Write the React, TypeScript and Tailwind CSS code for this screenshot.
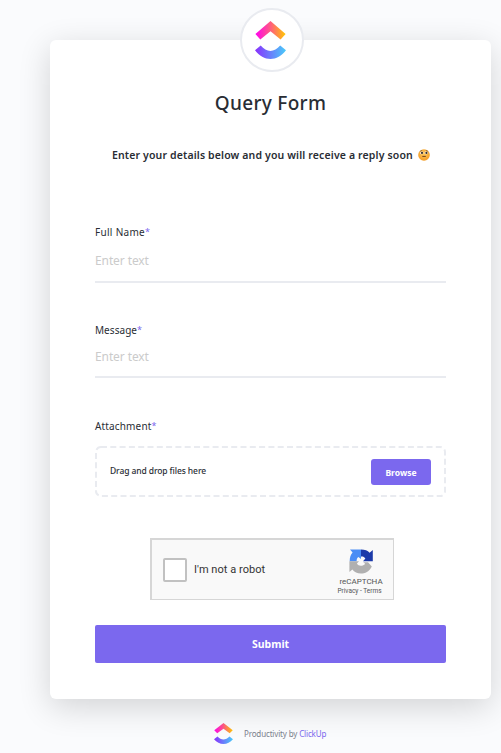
import React from "react";

function ClickUpMark({ id, className }: { id: string; className: string }) {
  return (
    <svg viewBox="0 0 31 38" preserveAspectRatio="none" className={className} aria-hidden="true">
      <defs>
        <linearGradient id={`${id}-top`} x1="0" x2="1" y1="0" y2="0">
          <stop offset="0" stopColor="#ff02f0" />
          <stop offset="0.5" stopColor="#ff5c80" />
          <stop offset="1" stopColor="#ffc800" />
        </linearGradient>
        <linearGradient id={`${id}-bottom`} x1="0" x2="1" y1="0" y2="0">
          <stop offset="0" stopColor="#8930fd" />
          <stop offset="1" stopColor="#49ccf9" />
        </linearGradient>
      </defs>
      <path d="M15.5 0 L30.6 13 L25.6 18.6 L15.5 10.2 L5.3 18.6 L0.4 13 Z" fill={`url(#${id}-top)`} />
      <path
        d="M0 29.2 L5.7 24.6 C11.6 31.8 19.2 31.8 25.2 24.6 L31 29.2 C22.5 40.8 8.5 40.8 0 29.2 Z"
        fill={`url(#${id}-bottom)`}
      />
    </svg>
  );
}

function FaceEmoji() {
  return (
    <svg viewBox="0 0 12 12" className="h-3 w-3 shrink-0" aria-hidden="true">
      <defs>
        <radialGradient id="face" cx="0.5" cy="0.4" r="0.7">
          <stop offset="0" stopColor="#ffc95c" />
          <stop offset="1" stopColor="#f0941c" />
        </radialGradient>
      </defs>
      <circle cx="6" cy="6" r="5.8" fill="url(#face)" />
      <ellipse cx="3.8" cy="3.9" rx="1.6" ry="1.4" fill="#fff" />
      <ellipse cx="8.2" cy="3.9" rx="1.6" ry="1.4" fill="#fff" />
      <circle cx="4" cy="3.9" r="1.1" fill="#39302c" />
      <circle cx="8.4" cy="3.9" r="1.1" fill="#39302c" />
      <path d="M1.8 2.3 L4.2 1.4 M7.8 1.4 L10.2 2.3" stroke="#6b4319" strokeWidth="0.6" />
      <path d="M4.3 7.4 H7.8" stroke="#70401b" strokeWidth="1" />
    </svg>
  );
}

function RecaptchaMark() {
  return (
    <svg viewBox="0 0 24 25" className="h-[25px] w-6" aria-hidden="true">
      <path d="M12 0.5 C16 0.5 18.6 1.6 20.6 3.8 L23.8 1 V12.2 H14 L16.4 9.6 C15.4 8 14 7.4 12 7.6 Z" fill="#1c3aa9" />
      <path d="M0.7 12.3 C0.7 8.3 1.6 5.8 3.6 3.6 L1 0.5 H12 V10 L9.4 8 C8 9 7.6 10.4 7.6 12.3 Z" fill="#4a8df5" />
      <path d="M0.4 12.3 H10 L7.9 14.6 C9.4 17.4 13.8 17.6 16.2 14.8 L14.2 13.2 H19 L22.8 17.4 C18.5 26.3 7.5 26.3 3.4 20.4 L0.4 23 Z" fill="#b0b0b0" />
    </svg>
  );
}

function Label({ text, spacing }: { text: string; spacing: string }) {
  return (
    <div className="flex h-4 whitespace-nowrap text-[10px] leading-4 text-[#292d34]">
      <span className={spacing}>{text}</span>
      <span className="text-[9px] leading-[15px] text-[#7b68ee]">*</span>
    </div>
  );
}

export default function App() {
  return (
    <div className="h-[753px] w-[501px] overflow-hidden bg-[#fafbfd] pt-10 pl-[50px] font-['Noto_Sans','Open_Sans',sans-serif]">
      <main className="relative h-[659px] w-[441px] rounded-[6px] bg-white px-[45px] pt-[47px] shadow-[0_8px_32px_rgba(0,0,0,0.16)]">
        <div className="absolute -top-8 left-[190px] flex h-16 w-16 items-center justify-center rounded-full border-2 border-[#e9ebf0] bg-white pr-[3px]">
          <ClickUpMark id="badge" className="h-[38px] w-[31px]" />
        </div>

        <h1 className="h-8 whitespace-nowrap text-center text-[19px] font-medium leading-8 tracking-[0.3px] text-[#292d34]">
          Query Form
        </h1>
        <p className="mt-7 ml-[17px] flex h-4 items-center gap-[5px] whitespace-nowrap text-[10.5px] font-semibold leading-4 text-[#292d34]">
          <span className="w-[301px] tracking-[0.14px]">Enter your details below and you will receive a reply soon</span>
          <FaceEmoji />
        </p>

        <div className="mt-[61px]">
          <Label text="Full Name" spacing="tracking-[0.3px]" />
          <div className="mt-3 h-[31px] border-b-2 border-[#e9ebf0] text-[12px] leading-[18px] tracking-[-0.1px] text-[#cbcbcb]">Enter text</div>
        </div>
        <div className="mt-[39px]">
          <Label text="Message" spacing="tracking-[0.05px]" />
          <div className="mt-[10px] h-[30px] border-b-2 border-[#e9ebf0] text-[12px] leading-[18px] tracking-[-0.1px] text-[#cbcbcb]">Enter text</div>
        </div>
        <div className="mt-10">
          <Label text="Attachment" spacing="tracking-[0.15px]" />
          <div className="relative mt-3 flex h-[51px] items-center justify-between pr-[15px] pl-[15px]">
            <svg className="absolute inset-0 h-full w-full" aria-hidden="true">
              <rect x="1" y="1" width="349" height="49" rx="5" fill="none" stroke="#e9ebf0" strokeWidth="2" strokeDasharray="6 3.3" />
            </svg>
            <span className="whitespace-nowrap text-[8.5px] font-medium tracking-[-0.1px] text-[#292d34]">Drag and drop files here</span>
            <button className="h-[26px] w-[60px] rounded-[3px] bg-[#7b68ee] pt-[3px] text-[8.5px] font-bold text-white">Browse</button>
          </div>
        </div>

        <div className="mt-[41px] ml-[55px] flex h-[62px] w-[244px] items-center border-t-2 border-r border-b border-l-2 border-[#d6d6d6] bg-[#f9f9f9] font-[Roboto,sans-serif]">
          <div className="ml-[11px] h-6 w-6 rounded-[2px] border-2 border-[#c1c1c1] bg-white" />
          <span className="ml-[7px] whitespace-nowrap pt-[2px] text-[11px] tracking-[0.04px] text-[#333]">I'm not a robot</span>
          <div className="mr-[4px] ml-auto flex w-[56px] flex-col items-center pt-[4px]">
            <RecaptchaMark />
            <span className="mt-[3px] whitespace-nowrap text-[8px] leading-[10px] text-[#555]">reCAPTCHA</span>
            <span className="mr-[3px] whitespace-nowrap text-[6.5px] leading-[8px] text-[#555]">Privacy - Terms</span>
          </div>
        </div>

        <button className="mt-[25px] block h-[38px] w-full rounded-[2px] bg-[#7b68ee] pt-px text-[10.5px] font-bold text-white">Submit</button>
      </main>

      <footer className="mt-6 ml-[164px] flex h-[21px] items-center">
        <ClickUpMark id="footer" className="h-[21px] w-[19px]" />
        <span className="ml-[11px] whitespace-nowrap pt-px text-[8px] tracking-[-0.15px] text-[#7c828d]">
          Productivity by <span className="text-[#7b68ee]">ClickUp</span>
        </span>
      </footer>
    </div>
  );
}
